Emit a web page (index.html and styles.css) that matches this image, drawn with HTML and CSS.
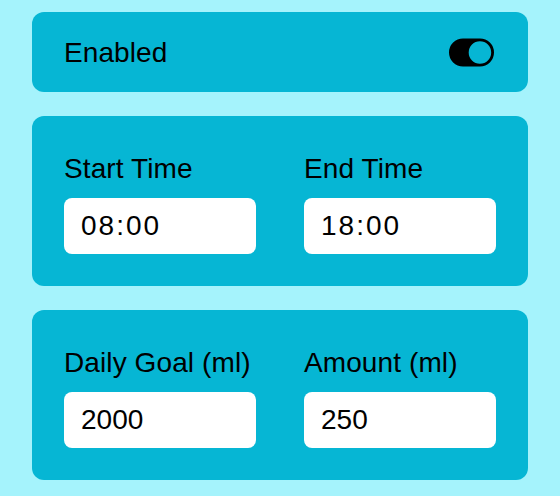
FILE: index.html
```html
<!DOCTYPE html>
<html>
<head>
<meta charset="utf-8">
<link rel="stylesheet" href="styles.css">
</head>
<body>
<main class="settings">
  <section class="card card-row">
    <span class="label">Enabled</span>
    <svg class="toggle" viewBox="0 0 16 16" width="45" height="45" aria-hidden="true">
      <path fill="#000" d="M5 3a5 5 0 0 0 0 10h6a5 5 0 0 0 0-10zm6 9a4 4 0 1 1 0-8 4 4 0 0 1 0 8"/>
    </svg>
  </section>
  <section class="card card-grid">
    <label class="field">
      <span class="label">Start Time</span>
      <input class="input input-time" type="text" value="08:00" readonly>
    </label>
    <label class="field">
      <span class="label">End Time</span>
      <input class="input input-time" type="text" value="18:00" readonly>
    </label>
  </section>
  <section class="card card-grid">
    <label class="field">
      <span class="label">Daily Goal (ml)</span>
      <input class="input" type="text" value="2000" readonly>
    </label>
    <label class="field">
      <span class="label">Amount (ml)</span>
      <input class="input" type="text" value="250" readonly>
    </label>
  </section>
</main>
</body>
</html>
```
FILE: styles.css
```css
html, body {
  margin: 0;
  background: #a5f3fc;
}
body {
  font-family: "Liberation Sans", Arial, sans-serif;
  color: #000;
}
.settings {
  display: flex;
  flex-direction: column;
  gap: 24px;
  padding: 12px 32px;
}
.card {
  background: #06b6d4;
  border-radius: 12px;
}
.card-row {
  height: 80px;
  box-sizing: border-box;
  padding: 2px 34px 0 32px;
  display: flex;
  align-items: center;
  justify-content: space-between;
}
.label {
  font-size: 28px;
  line-height: 36px;
  letter-spacing: 0.1px;
}
.toggle {
  display: block;
  margin-top: -2px;
}
.card-grid {
  display: grid;
  grid-template-columns: 1fr 1fr;
  column-gap: 48px;
  padding: 35px 32px 32px;
}
.field {
  display: flex;
  flex-direction: column;
  gap: 11px;
}
.input {
  height: 56px;
  box-sizing: border-box;
  border: none;
  border-radius: 8px;
  background: #fff;
  padding: 0 17px;
  font-family: "Liberation Sans", Arial, sans-serif;
  font-size: 28px;
  color: #000;
  outline: none;
  width: 100%;
}
.input-time {
  letter-spacing: 2px;
}
```
